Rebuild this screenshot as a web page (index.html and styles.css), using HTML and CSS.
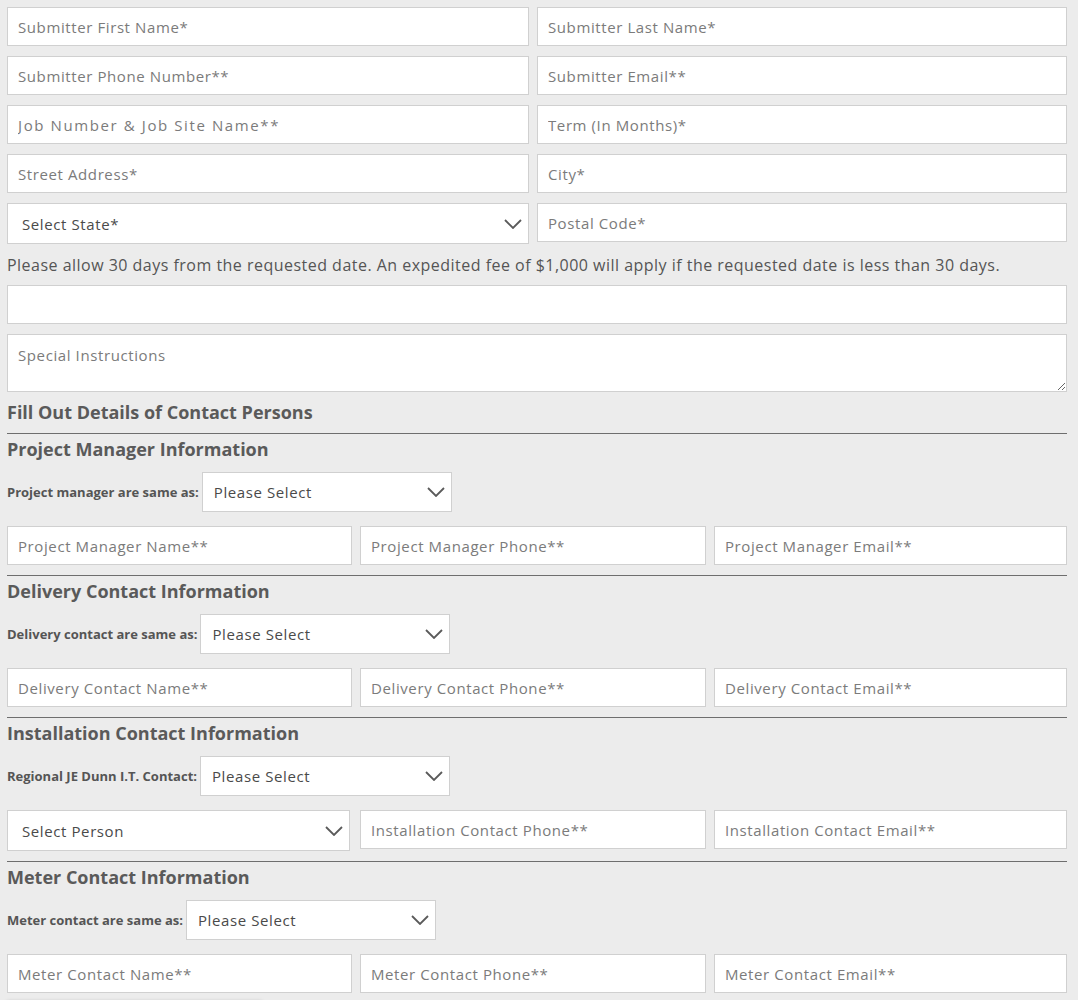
FILE: index.html
```html
<!DOCTYPE html>
<html lang="en">
<head>
    <meta charset="UTF-8">
    <title>Site Request Form</title>
    <link rel="stylesheet" href="styles.css">
</head>
<body>
    <form class="request-form">
        <!-- Submitter / site -->
        <div class="row row-2">
            <input type="text" placeholder="Submitter First Name*">
            <input type="text" placeholder="Submitter Last Name*">
        </div>
        <div class="row row-2">
            <input type="text" placeholder="Submitter Phone Number**">
            <input type="text" placeholder="Submitter Email**">
        </div>
        <div class="row row-2">
            <input type="text" class="wide-text" placeholder="Job Number &amp; Job Site Name**">
            <input type="text" placeholder="Term (In Months)*">
        </div>
        <div class="row row-2">
            <input type="text" placeholder="Street Address*">
            <input type="text" placeholder="City*">
        </div>
        <div class="row row-2 row-last">
            <div class="select-wrap select-tall">
                <select><option>Select State*</option></select>
                <svg class="chevron" viewBox="0 0 18 10"><path d="M1 1l8 8 8-8"/></svg>
            </div>
            <input type="text" placeholder="Postal Code*">
        </div>
        <p class="notice">Please allow 30 days from the requested date. An expedited fee of $1,000 will apply if the requested date is less than 30 days.</p>
        <input type="text" class="full">
        <textarea placeholder="Special Instructions"></textarea>

        <h3 class="form-title">Fill Out Details of Contact Persons</h3>

        <!-- Project manager -->
        <div class="contact-section">
            <h4>Project Manager Information</h4>
            <div class="same-as">
                <label>Project manager are same as:</label>
                <div class="select-wrap">
                    <select><option>Please Select</option></select>
                    <svg class="chevron" viewBox="0 0 18 10"><path d="M1 1l8 8 8-8"/></svg>
                </div>
            </div>
            <div class="row row-3">
                <input type="text" placeholder="Project Manager Name**">
                <input type="text" placeholder="Project Manager Phone**">
                <input type="text" placeholder="Project Manager Email**">
            </div>
        </div>

        <!-- Delivery -->
        <div class="contact-section">
            <h4>Delivery Contact Information</h4>
            <div class="same-as">
                <label>Delivery contact are same as:</label>
                <div class="select-wrap">
                    <select><option>Please Select</option></select>
                    <svg class="chevron" viewBox="0 0 18 10"><path d="M1 1l8 8 8-8"/></svg>
                </div>
            </div>
            <div class="row row-3">
                <input type="text" placeholder="Delivery Contact Name**">
                <input type="text" placeholder="Delivery Contact Phone**">
                <input type="text" placeholder="Delivery Contact Email**">
            </div>
        </div>

        <!-- Installation -->
        <div class="contact-section">
            <h4>Installation Contact Information</h4>
            <div class="same-as">
                <label>Regional JE Dunn I.T. Contact:</label>
                <div class="select-wrap">
                    <select><option>Please Select</option></select>
                    <svg class="chevron" viewBox="0 0 18 10"><path d="M1 1l8 8 8-8"/></svg>
                </div>
            </div>
            <div class="row row-3">
                <div class="select-wrap select-tall select-person">
                    <select><option>Select Person</option></select>
                    <svg class="chevron" viewBox="0 0 18 10"><path d="M1 1l8 8 8-8"/></svg>
                </div>
                <input type="text" placeholder="Installation Contact Phone**">
                <input type="text" placeholder="Installation Contact Email**">
            </div>
        </div>

        <!-- Meter -->
        <div class="contact-section">
            <h4>Meter Contact Information</h4>
            <div class="same-as">
                <label>Meter contact are same as:</label>
                <div class="select-wrap">
                    <select><option>Please Select</option></select>
                    <svg class="chevron" viewBox="0 0 18 10"><path d="M1 1l8 8 8-8"/></svg>
                </div>
            </div>
            <div class="row row-3">
                <input type="text" placeholder="Meter Contact Name**">
                <input type="text" placeholder="Meter Contact Phone**">
                <input type="text" placeholder="Meter Contact Email**">
            </div>
        </div>
        <div class="submit-bar"></div>
    </form>
</body>
</html>
```

FILE: styles.css
```css
* {
    margin: 0;
    padding: 0;
    box-sizing: border-box;
    font-family: 'Open Sans', 'Liberation Sans', sans-serif;
}
body {
    background-color: #ececec;
    color: #555;
}
.request-form {
    padding: 7px 11px 0 7px;
}
.row {
    display: grid;
    column-gap: 8px;
    margin-bottom: 10px;
    align-items: start;
}
.row-2 {
    grid-template-columns: 522px 1fr;
}
.row-last {
    margin-bottom: 8px;
}
.row-3 {
    grid-template-columns: 345px 346px 1fr;
}
input[type="text"], textarea, select {
    width: 100%;
    height: 39px;
    background-color: #fff;
    border: 1px solid #d0d0d0;
    border-radius: 0;
    padding: 0 10px;
    font-size: 15px;
    letter-spacing: 0.6px;
    color: #555;
    outline: none;
}
input[type="text"].wide-text {
    letter-spacing: 1.6px;
}
input::placeholder, textarea::placeholder {
    color: #7b7b7b;
}
.full {
    display: block;
    margin-bottom: 10px;
}
textarea {
    display: block;
    height: 58px;
    padding-top: 10px;
    resize: vertical;
}
.notice {
    font-size: 16px;
    line-height: 26px;
    letter-spacing: 0.48px;
    margin-bottom: 7px;
}
.select-wrap {
    position: relative;
    width: 250px;
}
.select-wrap select {
    appearance: none;
    -webkit-appearance: none;
    height: 40px;
    padding-left: 11px;
    color: #4a4a4a;
}
.select-tall {
    width: 100%;
}
.select-tall select {
    height: 41px;
    padding-left: 14px;
}
.select-person {
    width: 343px;
}
.chevron {
    position: absolute;
    right: 7px;
    top: 15px;
    width: 18px;
    height: 10px;
    fill: none;
    stroke: #5a5a5a;
    stroke-width: 1.8;
    pointer-events: none;
}
.select-tall .chevron {
    top: 16px;
}
.form-title {
    font-size: 18px;
    font-weight: 700;
    line-height: 24px;
    margin-top: 8px;
    padding-bottom: 9px;
    color: #5a5a5a;
}
.contact-section {
    border-top: 1px solid #6e6e6e;
    padding-top: 3px;
}
.contact-section h4 {
    font-size: 18px;
    font-weight: 700;
    line-height: 24px;
    color: #5a5a5a;
    margin-bottom: 11px;
}
.same-as {
    display: flex;
    align-items: center;
    gap: 3px;
    margin-bottom: 14px;
}
.same-as label {
    font-size: 13px;
    font-weight: 700;
    color: #555;
}
.submit-bar {
    width: 255px;
    height: 30px;
    margin-top: 3px;
    box-shadow: 0 -1px 4px rgba(0, 0, 0, 0.35);
}
```
